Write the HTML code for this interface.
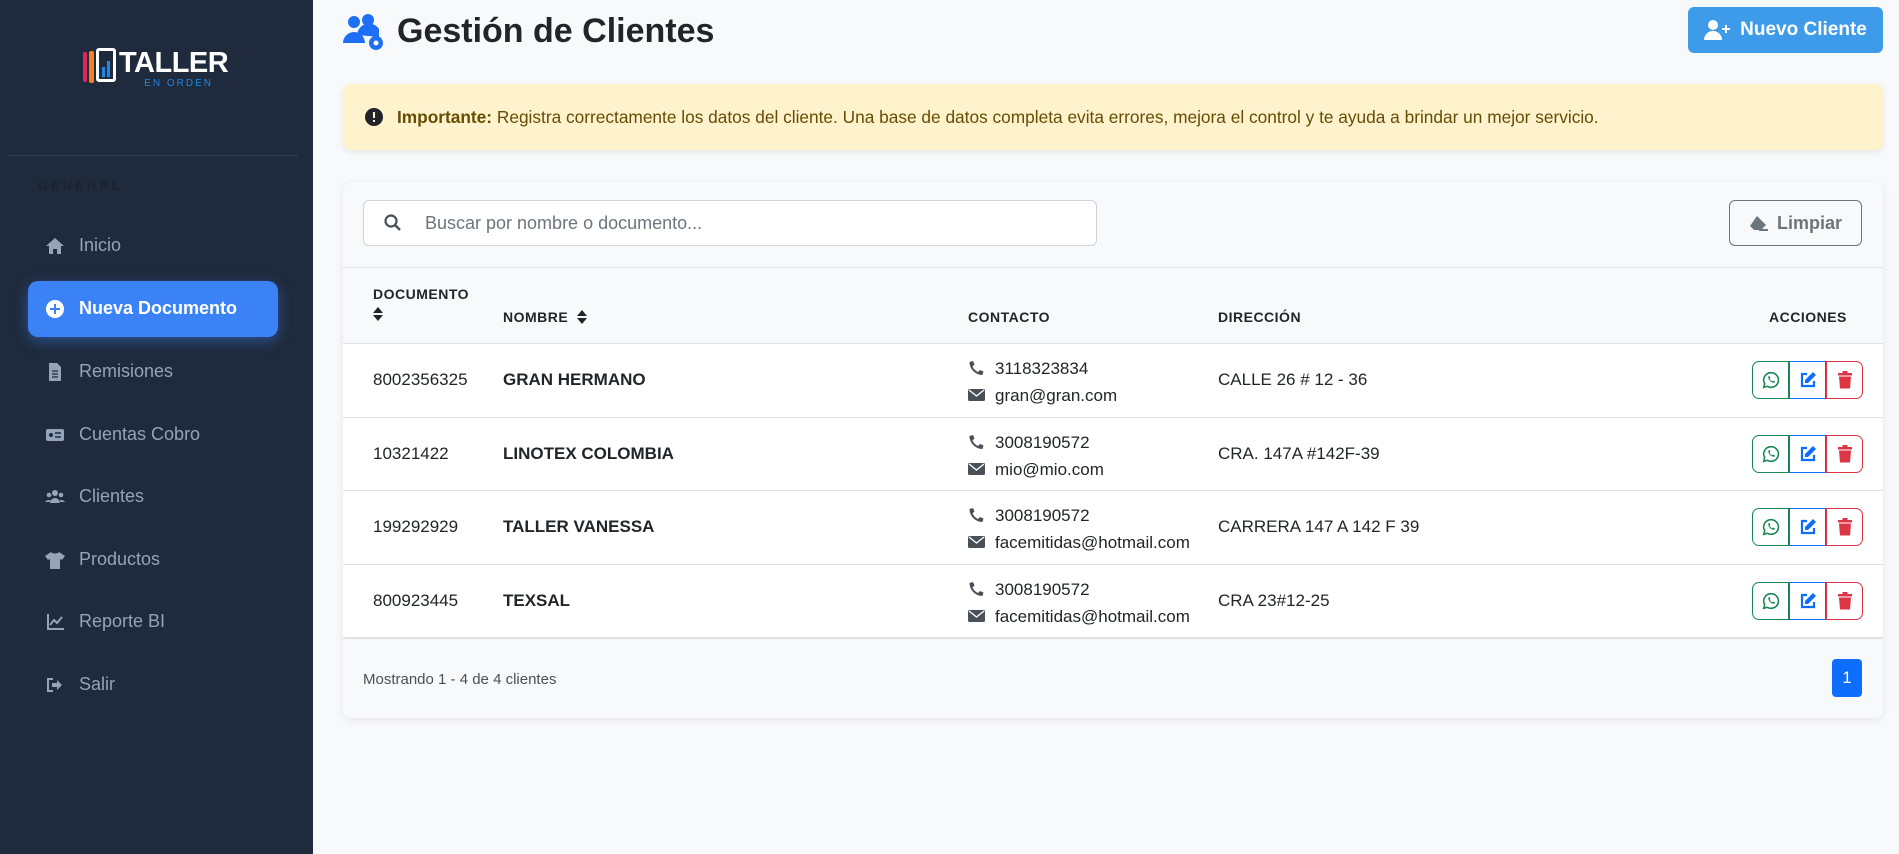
<!DOCTYPE html>
<html><head><meta charset="utf-8"><style>
*{box-sizing:border-box;margin:0;padding:0}
body{width:1899px;height:854px;overflow:hidden;background:#f8f9fa;font-family:"Liberation Sans",sans-serif;position:relative;color:#212529}
.sb{position:absolute;left:0;top:0;width:313px;height:854px;background:#1f2a3c}
.abs{position:absolute}
.mi{position:absolute;left:45px;color:#94a3b8;font-size:18px;display:flex;align-items:center;gap:14px}
.mi svg{width:20px;height:20px;fill:#94a3b8}
.th{position:absolute;font-size:14px;font-weight:bold;letter-spacing:.5px;color:#212529}
.row{position:absolute;left:343px;width:1540px;height:74px;border-top:1px solid #dee2e6;background:#fff}
.srt{display:inline-block;vertical-align:middle}
</style></head><body>
<div class="sb">
  <div class="abs" style="left:83px;top:48px;display:flex;align-items:flex-start">
    <div style="width:4px;height:30px;background:#e0245e;border-radius:2px;margin-top:4px"></div>
    <div style="width:5px;height:32px;background:#f58220;border-radius:2px;margin:3px 0 0 2px"></div>
    <div style="width:20px;height:34px;border:3px solid #fff;border-radius:3px;margin-left:2px;position:relative"><div style="position:absolute;left:3px;bottom:2px;width:3px;height:10px;background:#1e88e5"></div><div style="position:absolute;left:8px;bottom:2px;width:3px;height:16px;background:#1e88e5"></div></div>
    <div style="margin-left:3px;color:#fff;font-weight:bold;font-size:29px;line-height:30px;letter-spacing:-0.5px">TALLER<div style="font-size:10px;line-height:11px;color:#1e88e5;letter-spacing:2px;text-align:center;font-weight:normal;padding-left:10px">EN ORDEN</div></div>
  </div>
  <div class="abs" style="left:8px;top:155px;width:290px;height:1px;background:#334155"></div>
  <div class="abs" style="left:38px;top:178px;font-size:13px;font-weight:bold;letter-spacing:3px;color:#1a2230">GENERAL</div>
  <div class="mi" style="top:235px"><svg viewBox="0 0 20 20"><path d="M10 2L1 10h3v8h4v-5h4v5h4v-8h3z"/></svg>Inicio</div>
  <div class="abs" style="left:28px;top:281px;width:250px;height:56px;background:#3b82f6;border-radius:10px;box-shadow:0 4px 14px rgba(59,130,246,.45)"></div>
  <div class="mi" style="top:298px;color:#fff;font-weight:bold"><svg viewBox="0 0 20 20" style="fill:#fff"><circle cx="10" cy="10" r="9"/><path d="M9 5h2v4h4v2h-4v4H9v-4H5V9h4z" fill="#3b82f6"/></svg>Nueva Documento</div>
  <div class="mi" style="top:361px"><svg viewBox="0 0 20 20"><path d="M4 1h8l4 4v14H4z"/><path d="M7 9h6M7 12h6M7 15h6" stroke="#1f2a3c" stroke-width="1.3"/></svg>Remisiones</div>
  <div class="mi" style="top:424px"><svg viewBox="0 0 20 20"><rect x="1" y="4" width="18" height="12" rx="2"/><circle cx="6" cy="10" r="2" fill="#1f2a3c"/><path d="M10 8h6M10 12h6" stroke="#1f2a3c" stroke-width="1.5"/></svg>Cuentas Cobro</div>
  <div class="mi" style="top:486px"><svg viewBox="0 0 20 20"><circle cx="10" cy="6" r="3"/><circle cx="4" cy="8" r="2.3"/><circle cx="16" cy="8" r="2.3"/><path d="M5 16a5 5 0 0110 0zM0 15a4 4 0 016-1v1zM20 15a4 4 0 00-6-1v1z"/></svg>Clientes</div>
  <div class="mi" style="top:549px"><svg viewBox="0 0 20 20"><path d="M6 2l-6 4 3 4 2-1v10h10V9l2 1 3-4-6-4c-1 2-7 2-8 0z"/></svg>Productos</div>
  <div class="mi" style="top:611px"><svg viewBox="0 0 20 20"><path d="M2 2v16h17v-2H4V2z"/><path d="M5 13l4-5 3 3 5-6" stroke="#94a3b8" stroke-width="2" fill="none"/></svg>Reporte BI</div>
  <div class="mi" style="top:674px"><svg viewBox="0 0 20 20"><path d="M2 3h6v2H4v10h4v2H2z"/><path d="M12 5l5 5-5 5v-3H7V8h5z"/></svg>Salir</div>
</div>

<svg class="abs" style="left:343px;top:13px" width="44" height="38" viewBox="0 0 44 38" fill="#1e6ff5"><circle cx="11" cy="9" r="6"/><circle cx="25" cy="7" r="6"/><path d="M0 30a11 11 0 0122 0zM14 22a12 12 0 0122-6v8z"/><circle cx="33" cy="30" r="7"/><circle cx="33" cy="30" r="2.5" fill="#f8f9fa"/></svg>
<div class="abs" style="left:397px;top:12px;font-size:34px;font-weight:bold;color:#212529">Gestión de Clientes</div>
<div class="abs" style="left:1688px;top:7px;width:195px;height:46px;background:#3d9be9;border-radius:6px;color:#fff;font-size:19px;font-weight:bold;display:flex;align-items:center;justify-content:center;gap:8px"><svg width="28" height="20" viewBox="0 0 28 20" fill="#fff"><circle cx="9" cy="5" r="5"/><path d="M0 20a9 9 0 0118 0z"/><path d="M21 5h2v3h3v2h-3v3h-2v-3h-3V8h3z"/></svg>Nuevo Cliente</div>

<div class="abs" style="left:343px;top:84px;width:1540px;height:66px;background:#fff3cd;border-radius:8px;box-shadow:0 2px 6px rgba(0,0,0,.08);display:flex;align-items:center;font-size:17.3px;color:#664d03">
  <svg style="margin-left:22px" width="18" height="18" viewBox="0 0 18 18"><circle cx="9" cy="9" r="9" fill="#212529"/><rect x="8" y="4" width="2" height="6" fill="#fff3cd"/><rect x="8" y="12" width="2" height="2" fill="#fff3cd"/></svg>
  <span style="margin-left:14px"><b>Importante:</b> Registra correctamente los datos del cliente. Una base de datos completa evita errores, mejora el control y te ayuda a brindar un mejor servicio.</span>
</div>

<div class="abs" style="left:343px;top:182px;width:1540px;height:536px;background:#f8f9fa;border-radius:8px;box-shadow:0 2px 8px rgba(0,0,0,.08);overflow:hidden">
  <div class="abs" style="left:20px;top:18px;width:734px;height:46px;background:#fff;border:1px solid #ced4da;border-radius:6px;display:flex;align-items:center;font-size:18px;color:#6c757d">
    <svg style="margin-left:20px" width="18" height="18" viewBox="0 0 18 18"><circle cx="7" cy="7" r="5.5" stroke="#495057" stroke-width="2.2" fill="none"/><path d="M11 11l5 5" stroke="#495057" stroke-width="2.5"/></svg>
    <span style="margin-left:23px">Buscar por nombre o documento...</span>
  </div>
  <div class="abs" style="left:1386px;top:18px;width:133px;height:46px;border:1px solid #6c757d;border-radius:6px;display:flex;align-items:center;justify-content:center;gap:8px;font-size:18px;font-weight:bold;color:#6c757d"><svg width="20" height="16" viewBox="0 0 20 16" fill="#6c757d"><path d="M8 1l9 9-5 5H5l-4-4z"/><rect x="10" y="14" width="9" height="2"/></svg>Limpiar</div>
  <div class="abs" style="left:0;top:85px;width:1540px;height:76px;background:#f8f9fa;border-top:1px solid #dee2e6"></div>
  <div class="th" style="left:30px;top:104px">DOCUMENTO<br><svg class="srt" style="margin-top:5px" width="10" height="14" viewBox="0 0 10 14" fill="#212529"><path d="M5 0l5 6H0zM5 14l5-6H0z"/></svg></div>
  <div class="th" style="left:160px;top:127px">NOMBRE <svg class="srt" style="margin:-2px 0 0 4px" width="10" height="14" viewBox="0 0 10 14" fill="#212529"><path d="M5 0l5 6H0zM5 14l5-6H0z"/></svg></div>
  <div class="th" style="left:625px;top:127px">CONTACTO</div>
  <div class="th" style="left:875px;top:127px">DIRECCIÓN</div>
  <div class="th" style="left:1426px;top:127px">ACCIONES</div>
</div>

<div class="row" style="top:343px"></div>
<div class="row" style="top:417px"></div>
<div class="row" style="top:490px"></div>
<div class="row" style="top:564px;border-bottom:2px solid #dee2e6;height:75px"></div>

<div id="rows"></div>
<script>
const d=[["8002356325","GRAN HERMANO","3118323834","gran@gran.com","CALLE 26 # 12 - 36"],["10321422","LINOTEX COLOMBIA","3008190572","mio@mio.com","CRA. 147A #142F-39"],["199292929","TALLER VANESSA","3008190572","facemitidas@hotmail.com","CARRERA 147 A 142 F 39"],["800923445","TEXSAL","3008190572","facemitidas@hotmail.com","CRA 23#12-25"]];
const tops=[343,417,490,564];let h="";
const ph='<svg width="17" height="16" viewBox="0 0 16 16" style="vertical-align:-2px;margin-right:10px"><path d="M15 11.5l-3.5-1.5-2 2C7 10.8 5.2 9 4 6.5l2-2L4.5 1 1 2c0 7 6 13 13 13z" fill="#495057"/></svg>';
const em='<svg width="17" height="14" viewBox="0 0 17 14" style="vertical-align:-1px;margin-right:10px"><rect x="0" y="1" width="17" height="12" rx="1.5" fill="#495057"/><path d="M1 2l7.5 6L16 2" stroke="#fff" stroke-width="1.3" fill="none"/></svg>';
d.forEach((r,i)=>{const t=tops[i];
h+=`<div class="abs" style="left:373px;top:${t+27}px;font-size:17px">${r[0]}</div>
<div class="abs" style="left:503px;top:${t+27}px;font-size:17px;font-weight:bold">${r[1]}</div>
<div class="abs" style="left:968px;top:${t+12}px;font-size:17px;line-height:27px">${ph}${r[2]}<br>${em}${r[3]}</div>
<div class="abs" style="left:1218px;top:${t+27}px;font-size:17px">${r[4]}</div>
<div class="abs" style="left:1752px;top:${t+18}px;width:111px;height:38px;display:flex">
<span style="flex:1;border:1.5px solid #198754;border-radius:7px 0 0 7px;display:flex;align-items:center;justify-content:center"><svg width="18" height="18" viewBox="0 0 16 16"><path d="M8 1.5a6.5 6.5 0 00-5.6 9.8L1.5 14.5l3.3-.9A6.5 6.5 0 108 1.5z" stroke="#198754" stroke-width="1.4" fill="none"/><path d="M5.5 5c0 3 2.5 5.5 5.5 5.5l.5-1.3-1.7-.8-.8.8c-1-.5-1.8-1.3-2.3-2.3l.8-.8-.8-1.7z" fill="#198754"/></svg></span>
<span style="flex:1;border:1.5px solid #0d6efd;display:flex;align-items:center;justify-content:center"><svg width="18" height="18" viewBox="0 0 18 18"><path d="M8 3H3v12h12v-5" stroke="#0d6efd" stroke-width="2.2" fill="none"/><path d="M14 1l3 3-8 8H6V9z" fill="#0d6efd"/></svg></span>
<span style="flex:1;border:1.5px solid #dc3545;border-radius:0 7px 7px 0;display:flex;align-items:center;justify-content:center"><svg width="16" height="18" viewBox="0 0 16 18" fill="#dc3545"><rect x="1" y="2" width="14" height="2.5"/><rect x="5.5" y="0" width="5" height="2"/><path d="M2 5.5h12l-1 12H3z"/></svg></span></div>`;});
h+=`<div class="abs" style="left:363px;top:671px;font-size:15px;color:#495057">Mostrando 1 - 4 de 4 clientes</div>
<div class="abs" style="left:1832px;top:659px;width:30px;height:38px;background:#0d6efd;border-radius:4px;color:#fff;font-size:17px;display:flex;align-items:center;justify-content:center">1</div>`;
document.getElementById("rows").innerHTML=h;
</script>
</body></html>
